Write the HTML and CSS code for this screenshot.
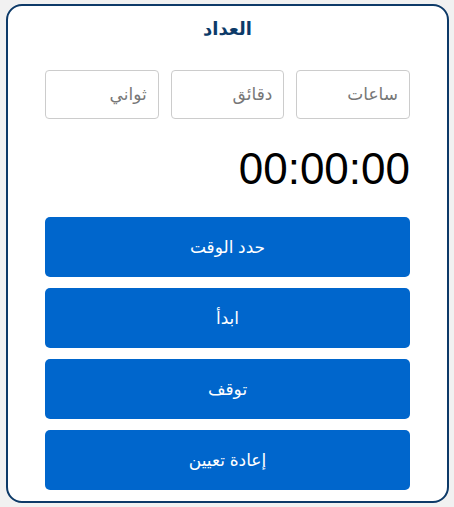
FILE: index.html
```html
<!DOCTYPE html>
<html lang="ar" dir="rtl">
<head>
<meta charset="utf-8">
<link rel="stylesheet" href="styles.css">
</head>
<body>
<div class="card">
  <h1 class="title">العداد</h1>
  <div class="inputs">
    <input class="field" type="number" placeholder="ساعات">
    <input class="field" type="number" placeholder="دقائق">
    <input class="field" type="number" placeholder="ثواني">
  </div>
  <div class="display">00:00:00</div>
  <div class="actions">
    <button class="btn">حدد الوقت</button>
    <button class="btn">ابدأ</button>
    <button class="btn">توقف</button>
    <button class="btn">إعادة تعيين</button>
  </div>
</div>
</body>
</html>
```

FILE: styles.css
```css
html, body {
  margin: 0;
  background: #f1f1f1;
}
body {
  padding: 4px 5px 4px 6px;
  font-family: "Liberation Sans", "DejaVu Sans", sans-serif;
}
.card {
  background: #ffffff;
  border: 2px solid #0d3a68;
  border-radius: 16px;
  padding: 10px 37px 11px 37px;
}
.title {
  margin: 0;
  font-size: 18px;
  line-height: 26px;
  font-weight: bold;
  color: #0d3a68;
  text-align: center;
}
.inputs {
  margin-top: 28px;
  display: grid;
  grid-template-columns: 1fr 1fr 1fr;
  gap: 12px;
}
.field {
  box-sizing: border-box;
  height: 49px;
  width: 100%;
  border: 1px solid #cccccc;
  border-radius: 4px;
  padding: 0 11px;
  font-family: inherit;
  font-size: 17px;
  background: #fff;
  direction: rtl;
}
.field::placeholder {
  color: #777777;
}
.display {
  margin-top: 25px;
  font-size: 44px;
  line-height: 50px;
  color: #000;
  text-align: right;
}
.actions {
  margin-top: 23px;
  display: flex;
  flex-direction: column;
  gap: 11px;
}
.btn {
  height: 60px;
  border: none;
  border-radius: 5px;
  background: #0066cc;
  color: #ffffff;
  font-family: inherit;
  font-size: 17px;
}
```
